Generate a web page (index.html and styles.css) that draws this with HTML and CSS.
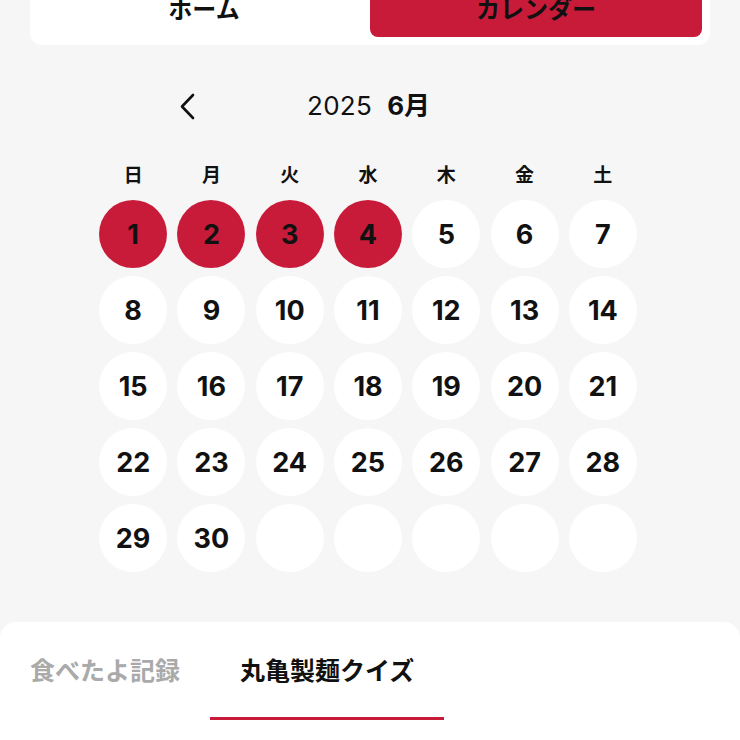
FILE: index.html
```html
<!DOCTYPE html>
<html lang="ja">
<head>
<meta charset="utf-8">
<title>カレンダー</title>
<link rel="stylesheet" href="styles.css">
</head>
<body>
<div class="page">
  <div class="segment">
    <div class="seg-item">ホーム</div>
    <div class="seg-item seg-active">カレンダー</div>
  </div>

  <div class="month-head">
    <button class="nav-btn" aria-label="前の月">
      <svg width="30" height="40" viewBox="0 0 30 40"><path d="M21 9 L10 20.5 L21 32" fill="none" stroke="#111" stroke-width="2.6" stroke-linecap="round" stroke-linejoin="round"/></svg>
    </button>
    <div class="month-title"><span class="year">2025</span><span class="month">6月</span></div>
    <div class="nav-spacer"></div>
  </div>

  <div class="weekdays">
    <div>日</div><div>月</div><div>火</div><div>水</div><div>木</div><div>金</div><div>土</div>
  </div>

  <div class="days">
    <div class="day marked">1</div>
    <div class="day marked">2</div>
    <div class="day marked">3</div>
    <div class="day marked">4</div>
    <div class="day">5</div>
    <div class="day">6</div>
    <div class="day">7</div>
    <div class="day">8</div>
    <div class="day">9</div>
    <div class="day">10</div>
    <div class="day">11</div>
    <div class="day">12</div>
    <div class="day">13</div>
    <div class="day">14</div>
    <div class="day">15</div>
    <div class="day">16</div>
    <div class="day">17</div>
    <div class="day">18</div>
    <div class="day">19</div>
    <div class="day">20</div>
    <div class="day">21</div>
    <div class="day">22</div>
    <div class="day">23</div>
    <div class="day">24</div>
    <div class="day">25</div>
    <div class="day">26</div>
    <div class="day">27</div>
    <div class="day">28</div>
    <div class="day">29</div>
    <div class="day">30</div>
    <div class="day"></div>
    <div class="day"></div>
    <div class="day"></div>
    <div class="day"></div>
    <div class="day"></div>
  </div>

  <div class="sheet">
    <div class="tabs">
      <div class="tab">食べたよ記録</div>
      <div class="tab tab-active">丸亀製麺クイズ</div>
    </div>
  </div>
</div>
</body>
</html>
```

FILE: styles.css
```css
* { box-sizing: border-box; }

html, body {
  margin: 0;
  padding: 0;
  background: #f6f6f6;
  height: 100%;
  overflow: hidden;
}

body {
  font-family: Inter, "Noto Sans CJK JP", sans-serif;
  color: #111;
}

.page {
  display: flex;
  flex-direction: column;
  min-height: 100%;
}

.segment {
  margin: -31px 30px 0;
  padding: 8px;
  background: #fff;
  border-radius: 12px;
  display: flex;
}

.seg-item {
  flex: 1;
  height: 60px;
  display: flex;
  align-items: center;
  justify-content: center;
  font-family: "Noto Sans CJK JP", sans-serif;
  font-weight: 700;
  font-size: 24px;
  border-radius: 8px;
  color: #111;
}

.seg-active {
  background: #c81b3a;
}

.month-head {
  margin-top: 41px;
  margin-left: 172px;
  height: 40px;
  display: flex;
  align-items: center;
  gap: 105px;
}

.nav-btn {
  width: 30px;
  height: 40px;
  padding: 0;
  border: 0;
  background: transparent;
  display: flex;
}

.nav-spacer {
  width: 30px;
  height: 40px;
}

.month-title {
  display: flex;
  align-items: baseline;
  gap: 15px;
  font-size: 26px;
  line-height: 40px;
  color: #111;
}

.year {
  font-weight: 400;
  letter-spacing: 0.3px;
}

.month {
  font-weight: 700;
}

.weekdays,
.days {
  width: 548px;
  margin: 0 0 0 94px;
  display: grid;
  grid-template-columns: repeat(7, 1fr);
  justify-items: center;
}

.weekdays {
  margin-top: 36px;
  height: 24px;
  font-family: "Noto Sans CJK JP", sans-serif;
  font-weight: 600;
  font-size: 19px;
  line-height: 24px;
}

.days {
  margin-top: 14px;
  row-gap: 8px;
}

.day {
  width: 68px;
  height: 68px;
  border-radius: 50%;
  background: #fff;
  display: flex;
  align-items: center;
  justify-content: center;
  font-weight: 700;
  font-size: 27px;
  color: #111;
}

.day.marked {
  background: #c81b3a;
}

.sheet {
  margin-top: 50px;
  flex: 1;
  background: #fff;
  border-radius: 16px 16px 0 0;
}

.tabs {
  display: flex;
}

.tab {
  padding: 29px 30px 30px;
  font-family: "Noto Sans CJK JP", sans-serif;
  font-weight: 700;
  font-size: 25px;
  line-height: 36px;
  color: #aaa;
  border-bottom: 3px solid transparent;
}

.tab-active {
  color: #111;
  border-bottom-color: #c81b3a;
}
```
